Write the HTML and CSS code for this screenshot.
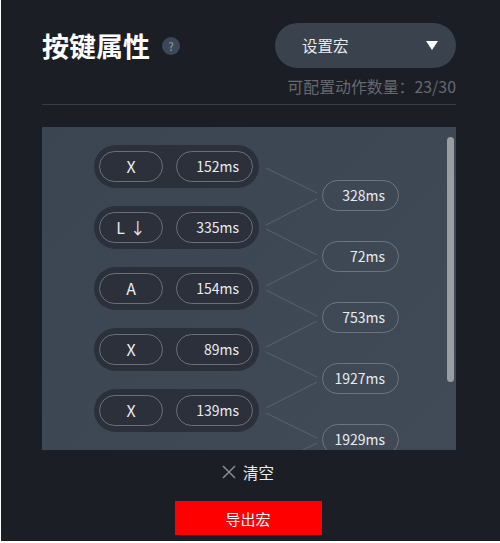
FILE: index.html
```html
<!DOCTYPE html>
<html lang="zh-CN">
<head>
    <meta charset="UTF-8">
    <meta name="viewport" content="width=device-width, initial-scale=1.0">
    <title>按键属性</title>
    <link rel="stylesheet" href="styles.css">
</head>
<body>
    <div class="app-container">
        <div class="app-header">
            <div class="title-group">
                <h1 class="title">按键属性</h1>
                <span class="help-icon">?</span>
            </div>
            <div class="select-box">
                <span class="select-label">设置宏</span>
                <span class="select-arrow"></span>
            </div>
        </div>
        <div class="action-count">可配置动作数量：23/30</div>
        <div class="macro-panel">
            <div class="macro-flow">
                <div class="key-column">
                    <div class="key-row">
                        <span class="key-pill">X</span>
                        <span class="time-pill">152ms</span>
                    </div>
                    <div class="key-row">
                        <span class="key-pill">L <span class="key-arrow">↓</span></span>
                        <span class="time-pill">335ms</span>
                    </div>
                    <div class="key-row">
                        <span class="key-pill">A</span>
                        <span class="time-pill">154ms</span>
                    </div>
                    <div class="key-row">
                        <span class="key-pill">X</span>
                        <span class="time-pill">89ms</span>
                    </div>
                    <div class="key-row">
                        <span class="key-pill">X</span>
                        <span class="time-pill">139ms</span>
                    </div>
                </div>
                <svg class="connectors" width="63" height="340" viewBox="0 0 63 340">
                    <path d="M7 23 58 48M58 54 7 80M7 84 58 110M58 115 7 141M7 145 58 171M58 176 7 202M7 207 58 232M58 237 7 263M7 268 58 293M58 298 7 324"/>
                </svg>
                <div class="delay-column">
                    <span class="delay-pill">328ms</span>
                    <span class="delay-pill">72ms</span>
                    <span class="delay-pill">753ms</span>
                    <span class="delay-pill">1927ms</span>
                    <span class="delay-pill">1929ms</span>
                </div>
            </div>
            <div class="scrollbar"></div>
        </div>
        <div class="clear-btn">
            <svg class="clear-icon" width="14" height="14" viewBox="0 0 14 14">
                <path d="M1 1 13 13M13 1 1 13"/>
            </svg>
            <span>清空</span>
        </div>
        <button class="export-btn">导出宏</button>
    </div>
</body>
</html>
```

FILE: styles.css
```css
* {
    margin: 0;
    padding: 0;
    box-sizing: border-box;
}

body {
    font-family: "Noto Sans CJK SC", "Noto Sans", sans-serif;
    background-color: #fff;
    padding-left: 1px;
}

.app-container {
    width: 499px;
    height: 541px;
    background-color: #1b1e24;
    padding: 23px 44px 0 41px;
    display: flex;
    flex-direction: column;
    overflow: hidden;
}

.app-header {
    display: flex;
    justify-content: space-between;
    align-items: center;
}

.title-group {
    display: flex;
    align-items: center;
    gap: 12px;
}

.title {
    font-size: 27px;
    line-height: 45px;
    font-weight: 700;
    color: #fff;
}

.help-icon {
    width: 18px;
    height: 18px;
    border-radius: 50%;
    background-color: #3c4859;
    color: #98a3b0;
    font-size: 11px;
    line-height: 18px;
    text-align: center;
}

.select-box {
    width: 181px;
    height: 45px;
    border-radius: 23px;
    background-color: #3a424e;
    color: #e8eaec;
    font-size: 15.5px;
    padding: 0 18px 0 27px;
    display: flex;
    justify-content: space-between;
    align-items: center;
}

.select-label {
    margin-top: -2px;
}

.select-arrow {
    width: 0;
    height: 0;
    border-left: 6px solid transparent;
    border-right: 6px solid transparent;
    border-top: 9px solid #fff;
}

.action-count {
    margin-top: 7px;
    padding-bottom: 5px;
    border-bottom: 1px solid #3a3c41;
    color: #66696e;
    font-size: 15.9px;
    line-height: 24px;
    text-align: right;
}

.macro-panel {
    position: relative;
    margin-top: 22px;
    height: 323px;
    background: linear-gradient(135deg, #3a4551, #414b57);
    overflow: hidden;
}

.macro-flow {
    display: flex;
    align-items: flex-start;
    padding: 18px 0 0 52px;
}

.key-column {
    display: flex;
    flex-direction: column;
    gap: 18px;
}

.key-row {
    width: 165px;
    height: 43px;
    border-radius: 22px;
    background-color: #2c303b;
    padding: 6px 6px 0 5px;
    display: flex;
    justify-content: space-between;
}

.key-pill,
.time-pill,
.delay-pill {
    height: 31px;
    border-radius: 16px;
    color: #e9ebee;
    line-height: 29px;
}

.key-pill {
    width: 64px;
    border: 1px solid #6c7076;
    font-size: 16px;
    text-align: center;
}

.key-arrow {
    margin-left: 1px;
}

.time-pill {
    width: 77px;
    border: 1px solid #6c7076;
    font-size: 14px;
    text-align: right;
    padding-right: 13px;
}

.connectors {
    flex-shrink: 0;
}

.connectors path {
    fill: none;
    stroke: #59626d;
    stroke-width: 1;
}

.delay-column {
    margin-top: 35px;
    display: flex;
    flex-direction: column;
    gap: 30px;
}

.delay-pill {
    width: 77px;
    border: 1px solid #6c747e;
    font-size: 14px;
    text-align: right;
    padding-right: 13px;
}

.scrollbar {
    position: absolute;
    top: 10px;
    right: 2px;
    width: 7px;
    height: 245px;
    border-radius: 4px;
    background-color: #9a9da1;
}

.clear-btn {
    margin-top: 10px;
    margin-right: 2px;
    height: 24px;
    display: flex;
    justify-content: center;
    align-items: center;
    gap: 7px;
    color: #eceded;
    font-size: 15.5px;
}

.clear-icon path {
    fill: none;
    stroke: #8a8c8f;
    stroke-width: 1.5;
}

.export-btn {
    align-self: center;
    margin-top: 17px;
    margin-right: 2px;
    width: 147px;
    height: 34px;
    border: none;
    background-color: #f00;
    color: #fff;
    font-family: inherit;
    font-size: 15px;
}
```
